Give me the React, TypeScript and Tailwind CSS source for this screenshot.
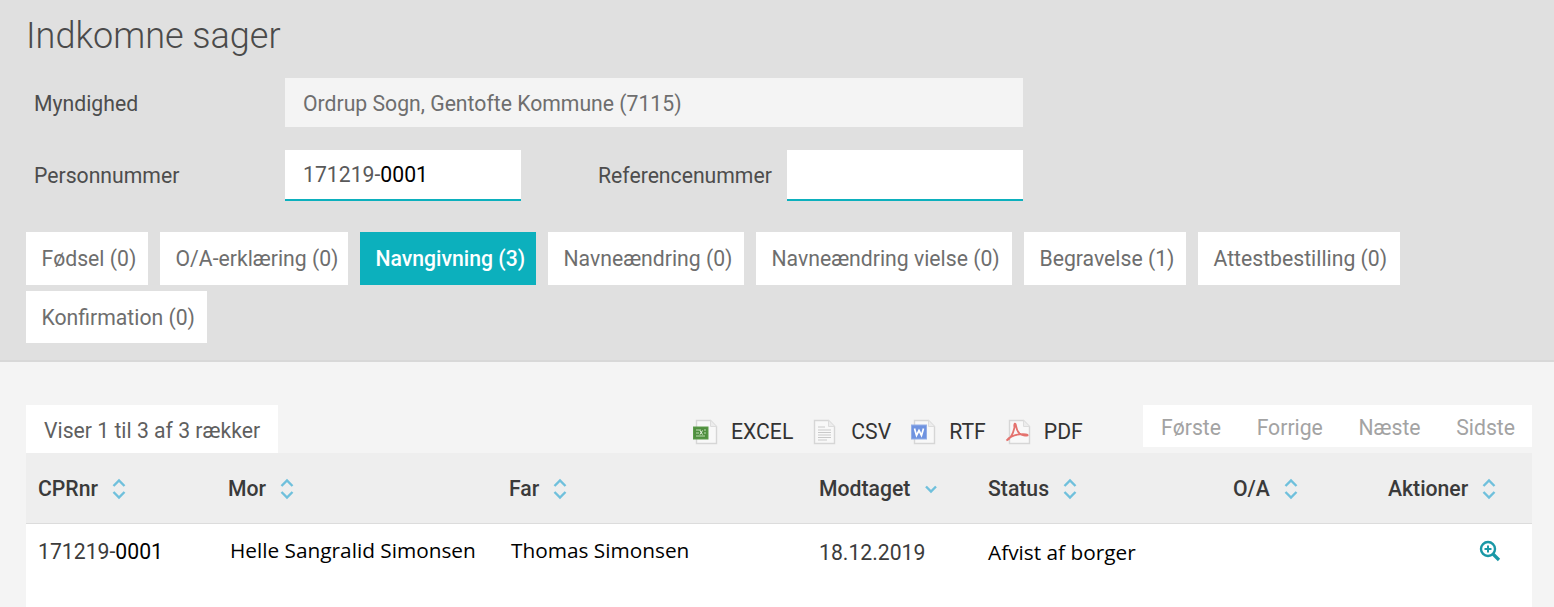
const tabs = [
  { label: "Fødsel (0)", width: "w-[122px]" },
  { label: "O/A-erklæring (0)", width: "w-[188px]" },
  { label: "Navngivning (3)", width: "w-[176px]", active: true },
  { label: "Navneændring (0)", width: "w-[196px]" },
  { label: "Navneændring vielse (0)", width: "w-[256px]" },
  { label: "Begravelse (1)", width: "w-[162px]" },
  { label: "Attestbestilling (0)", width: "w-[202px]" },
  { label: "Konfirmation (0)", width: "w-[181px]" },
];

const SortIcon = ({ down }: { down?: boolean }) => (
  <svg width="16" height="22" viewBox="0 0 16 22" fill="none" stroke="#6fc0dc" strokeWidth="2.4">
    {down ? (
      <path d="M3 8.5l5 5 5-5" />
    ) : (
      <>
        <path d="M2.5 8 8 2.5 13.5 8" />
        <path d="M2.5 14 8 19.5 13.5 14" />
      </>
    )}
  </svg>
);

const FileBase = ({ children }: { children?: React.ReactNode }) => (
  <svg width="26" height="26" viewBox="0 0 26 26" fill="none" className="overflow-visible">
    <path d="M3.5 1.5h14l6 6v17h-20z" fill="#f8f8f8" stroke="#d6d6d6" strokeWidth="1.4" />
    <path d="M17.5 1.5v6h6" fill="#ececec" stroke="#dcdcdc" strokeWidth="1" />
    {children}
  </svg>
);

const ExcelIcon = () => (
  <FileBase>
    <rect x="0.5" y="8" width="14.5" height="12" fill="#4f8f3f" stroke="#5c9c4a" />
    <path d="M3 11h5M3 14h3M3 17h9M11 11h2M11 14h2" stroke="#bcdcb0" strokeWidth="1.2" />
    <path d="M7 11.5l2.5 4M9.5 11.5l-2.5 4" stroke="#e8f3e2" strokeWidth="1" />
  </FileBase>
);

const CsvIcon = () => (
  <FileBase>
    <path d="M7 8h7M7 11h13M7 13.5h13M7 16h13M7 18.5h13M7 21h9" stroke="#c9c9c9" strokeWidth="1.1" />
  </FileBase>
);

const RtfIcon = () => (
  <FileBase>
    <rect x="0.5" y="6" width="15" height="14" fill="#6f93e0" stroke="#94aee6" />
    <path d="M3.5 9.5l2 7 2.5-5 2.5 5 2-7" stroke="#fff" strokeWidth="1.7" />
  </FileBase>
);

const PdfIcon = () => (
  <FileBase>
    <path
      d="M0.5 21.5c3.5-1.5 6.5-6.5 8-13-.6-3 .2-4.5 1-3.5 1 1.5 0 6 4 9.5 2.5 2 6.5 2.5 8 2 1-1-3-1.8-8-1.2-5 .6-10 2.7-13 6.2"
      stroke="#e4726e"
      strokeWidth="1.8"
    />
  </FileBase>
);

const columns = [
  { label: "CPRnr" },
  { label: "Mor" },
  { label: "Far" },
  { label: "Modtaget", sorted: true },
  { label: "Status" },
  { label: "O/A" },
  { label: "Aktioner" },
];

const gridCols = "grid grid-cols-[190px_281px_310px_169px_245px_155px_1fr] pl-3";

export default function App() {
  return (
    <div className="min-h-[607px] bg-[#f4f4f4] font-['Roboto',sans-serif] overflow-hidden">
      <section className="h-[362px] bg-[#e0e0e0] border-b-2 border-[#d8d8d8] pt-[15px] pl-[26px]">
        <h1 className="text-[36px] leading-[42px] font-light text-[#4a4a4a]">Indkomne sager</h1>

        <div className="mt-[21px] flex items-center">
          <label className="w-[259px] pl-2 pt-0.5 text-[21.2px] text-[#4d4d4d]">Myndighed</label>
          <div className="w-[738px] h-[49px] bg-[#f4f4f4] pl-[18px] pt-0.5 flex items-center text-[21.2px] text-[#6e6e6e]">
            Ordrup Sogn, Gentofte Kommune (7115)
          </div>
        </div>

        <div className="mt-[23px] flex items-center">
          <label className="w-[259px] pl-2 text-[21.2px] text-[#4d4d4d]">Personnummer</label>
          <div className="w-[236px] h-[51px] bg-white border-b-2 border-[#0cb0bd] pl-[18px] flex items-center text-[21.2px] text-[#5a5a5a]">
            171219-<span className="text-black">0001</span>
          </div>
          <label className="w-[266px] pl-[77px] text-[21.2px] text-[#4d4d4d] whitespace-nowrap">Referencenummer</label>
          <div className="w-[236px] h-[51px] bg-white border-b-2 border-[#0cb0bd]"></div>
        </div>

        <div className="mt-[31px] flex flex-wrap gap-x-3 gap-y-1.5 w-[1400px]">
          {tabs.map((tab) => (
            <div
              key={tab.label}
              className={`${tab.width} h-[53px] last:h-[52px] last:pt-0.5 pl-[15.5px] flex items-center text-[21.2px] ${
                tab.active ? "bg-[#0cb0bd] font-medium text-white" : "bg-white text-[#6e6e6e]"
              }`}
            >
              {tab.label}
            </div>
          ))}
        </div>
      </section>

      <section className="px-[26px] pr-[22px] pt-[43px]">
        <div className="flex items-start">
          <div className="w-[252px] h-12 bg-white pl-[18px] pt-1 flex items-center text-[21.2px] text-[#5f5f5f]">
            Viser 1 til 3 af 3 rækker
          </div>
          <div className="ml-[415px] mt-[11px] flex items-center text-[21.2px] text-[#333]">
            <ExcelIcon />
            <span className="ml-3">EXCEL</span>
            <span className="ml-[18px]"><CsvIcon /></span>
            <span className="ml-3.5">CSV</span>
            <span className="ml-5"><RtfIcon /></span>
            <span className="ml-3">RTF</span>
            <span className="ml-5"><PdfIcon /></span>
            <span className="ml-3">PDF</span>
          </div>
          <div className="ml-auto w-[389px] h-[42px] bg-white flex items-center justify-between pl-[18px] pr-[17px] pt-1 text-[21.2px] text-[#a3a3a3]">
            <span>Første</span>
            <span>Forrige</span>
            <span>Næste</span>
            <span>Sidste</span>
          </div>
        </div>

        <div className="bg-white h-[154px]">
          <div className={`${gridCols} h-[71px] bg-[#eeeeee] border-b border-[#dcdcdc] pt-0.5 items-center`}>
            {columns.map((col) => (
              <div key={col.label} className="flex items-center gap-[13px] text-[21.2px] font-medium text-[#3a3a3a]">
                {col.label}
                <SortIcon down={col.sorted} />
              </div>
            ))}
          </div>
          <div className={`${gridCols} pt-[9px] items-center text-black font-['Open_Sans',sans-serif] text-[20.8px]`}>
            <div className="font-['Roboto',sans-serif] text-[21.2px] pt-0.5">
              <span className="text-[#3c3c3c]">171219-</span>0001
            </div>
            <div className="pl-0.5">Helle Sangralid Simonsen</div>
            <div className="pl-0.5">Thomas Simonsen</div>
            <div className="font-['Roboto',sans-serif] text-[21.2px] text-[#3c3c3c] pt-1">18.12.2019</div>
            <div className="pt-1">Afvist af borger</div>
            <div></div>
            <div className="flex justify-end pr-[31px]">
              <svg width="22" height="22" viewBox="0 0 22 22" fill="none" stroke="#1a98a6" strokeWidth="2.4">
                <circle cx="9" cy="9" r="7" />
                <path d="M9 5.5v7M5.5 9h7" strokeWidth="2" />
                <path d="M14 14l6 6" strokeWidth="3.2" />
              </svg>
            </div>
          </div>
        </div>
      </section>
    </div>
  );
}
